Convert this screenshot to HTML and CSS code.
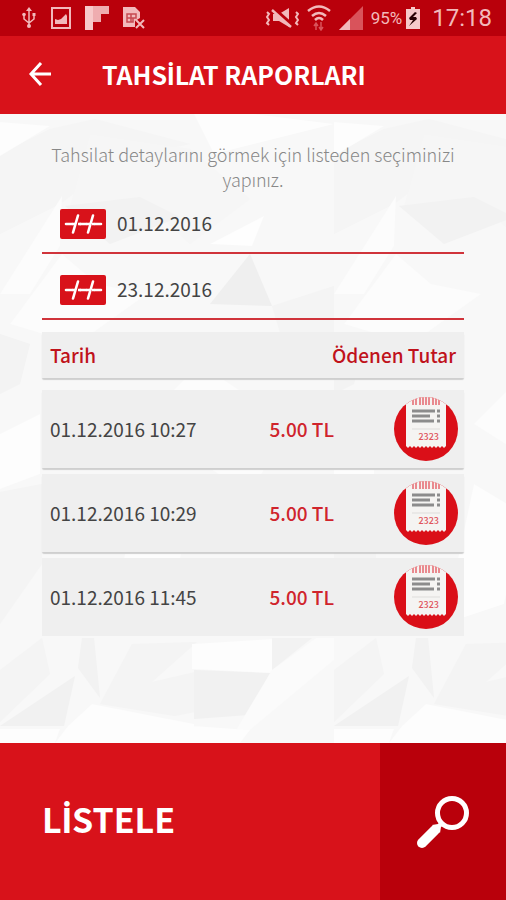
FILE: index.html
```html
<!DOCTYPE html>
<html lang="tr">
<head>
  <meta charset="UTF-8" />
  <meta name="viewport" content="width=device-width, initial-scale=1" />
  <title>Tahsilat Raporları</title>
  <link rel="stylesheet" href="styles.css">
</head>
<body>
  <svg class="sprite" aria-hidden="true">
    <symbol id="icon-date" viewBox="0 0 46 30">
      <rect width="46" height="30" rx="2" fill="#d8121a" />
      <path d="M6 15h6M20 15h6M35 15h6M13 23.500l5-17M28 23.500l5-17" fill="none" stroke="#fff" stroke-width="2.600" stroke-linecap="round" />
      <path d="M12 15h3M18 15h3M26 15h4M32 15h3" stroke="#fff" stroke-width="2.600" />
    </symbol>
    <symbol id="icon-receipt" viewBox="0 0 64 64">
      <clipPath id="disc"><circle cx="32" cy="32" r="32" /></clipPath>
      <g clip-path="url(#disc)">
        <rect width="64" height="64" fill="#da0f18" />
        <path d="M12 0h40v49l-2 2-2-2-2 2-2-2-2 2-2-2-2 2-2-2-2 2-2-2-2 2-2-2-2 2-2-2-2 2-2-2-2 2-2-2-2 2-2-2z" fill="#f5f4f2" />
        <path d="M19 3v5M22 0v8M26 0v8M29 0v8M32 0v8M35 0v8M39 0v8M42 0v8M45 3v5" stroke="#e98a8f" stroke-width="2" />
        <path d="M18 14h23M18 19h18M18 24h22M43 14h3M43 19h3M43 24h3" stroke="#8c8c8c" stroke-width="3" />
        <path d="M18 32h28" stroke="#dedddb" />
        <text x="45" y="43" class="receipt-no">2323</text>
      </g>
    </symbol>
  </svg>

  <div class="status-bar">
    <div class="status-group status-left">
      <svg width="16" height="22" viewBox="0 0 16 22" fill="none" stroke="#f2b9bb" stroke-width="1.500">
        <path d="M8 3v15M3 8v4l5 4 5-4V8" />
        <path d="M8 0l3 4H5z" fill="#f2b9bb" stroke="none" />
        <circle cx="8" cy="19" r="2" fill="#f2b9bb" stroke="none" />
        <circle cx="3" cy="7.500" r="1.800" fill="#f2b9bb" stroke="none" />
        <path d="M11.500 6h3v3h-3z" fill="#f2b9bb" stroke="none" />
      </svg>
      <svg width="20" height="22" viewBox="0 0 20 22">
        <rect x="1" y="1" width="18" height="20" fill="none" stroke="#f2b9bb" stroke-width="2" />
        <path d="M4 17v-5l3 1 3-1 5-5 1 2v8z" fill="#f2b9bb" />
      </svg>
      <svg width="24" height="24" viewBox="0 0 24 24">
        <path d="M0 0h24v8H16v8H8v8H0z" fill="#f7c9ca" />
        <path d="M8 8h8v8H8zM8 0h16v8H8z" fill="#efadb0" />
      </svg>
      <svg width="22" height="22" viewBox="0 0 22 22">
        <path d="M0 0h12l5 5v6l-5 3v6H0z" fill="#f2b9bb" />
        <path d="M4 7h9v4H4zM4 11h6v4H4zM8 7v8" fill="none" stroke="#c64a51" stroke-width="1.500" />
        <path d="M13 13l8 8M21 13l-8 8" stroke="#f2b9bb" stroke-width="2" />
      </svg>
    </div>
    <div class="status-group">
      <svg width="34" height="22" viewBox="0 0 34 22" fill="none" stroke="#f2b9bb">
        <path d="M2 5l2 2-2 3 2 3-2 3 2 2M31 5l2 2-2 3 2 3-2 3 2 2" stroke-width="2" />
        <path d="M8 7h6l10-6v19l-10-6H8z" fill="#f2b9bb" stroke="none" />
        <path d="M9 2l19 17" stroke="#b9000b" stroke-width="4" />
        <path d="M7 3l19 17" stroke-width="2.500" />
      </svg>
      <svg width="24" height="26" viewBox="0 0 24 26" fill="none" stroke="#f2b9bb" stroke-width="2.500">
        <path d="M1 6q11-9 22 0M5 11q7-6 14 0M8 15q4-4 8 0" />
        <path d="M9 18v7M7 21l2-3 2 3M14 17v7M12 22l2 3 2-3" stroke="#d9535b" stroke-width="1.500" />
      </svg>
      <svg width="24" height="24" viewBox="0 0 24 24">
        <path d="M0 24L24 0v24z" fill="#d9535b" />
        <path d="M0 24l11-11v11z" fill="#f2b9bb" />
      </svg>
      <span class="battery-text">95%</span>
      <svg class="battery" width="14" height="22" viewBox="0 0 14 22">
        <path d="M0 2h5V0h4v2h5v20H0z" fill="#f7c9ca" />
        <path d="M9 5l-6 6 1 2h3l-4 6 8-7-1-2H7l4-4z" fill="#2a0204" />
      </svg>
      <span class="clock">17:18</span>
    </div>
  </div>

  <header class="header">
    <button class="back-btn" type="button" aria-label="Geri">
      <svg width="24" height="24" viewBox="0 0 24 24" fill="none" stroke="#fff" stroke-width="3">
        <path d="M13 1L3 12l10 11M3 12h20" />
      </svg>
    </button>
    <h1>TAHS<span class="dotted">İ</span>LAT RAPORLARI</h1>
  </header>

  <main class="content">
    <svg class="facets" viewBox="0 0 506 629" preserveAspectRatio="xMidYMid slice" aria-hidden="true">
      <defs>
        <pattern id="facet" width="334" height="629" patternUnits="userSpaceOnUse">
          <rect width="334" height="629" fill="#f8f8f8" />
          <path d="M0 40l50-25 45-10 95 25-70 15-60 45-60 30z" fill="#f5f5f5" />
          <path d="M0 8l50 4-50 30zM334 10l-80-10h-60l20 40 60-15z" fill="#fdfdfd" />
          <path d="M90 20l100 15 60 50-60 45-50-47-70 10z" fill="#f6f6f6" />
          <path d="M65 92l75-9 40 20-70 27z" fill="#f2f2f2" />
          <path d="M210 130l54-28-12 30z" fill="#fefefe" />
          <path d="M210 190l40-50 22 52z" fill="#efefef" />
          <path d="M62 140l35 30 50 10-70 50-67-20z" fill="#fcfcfc" />
          <path d="M0 180l62-98-2 50-30 48z" fill="#fcfcfc" />
          <path d="M272 192l62-20v50l-50 10z" fill="#f4f4f4" />
          <path d="M0 220l30 10-10 40-20 10z" fill="#f3f3f3" />
          <path d="M0 320l40-20v60l-40 15z" fill="#fdfdfd" />
          <path d="M0 378l42-8v80l-42 60z" fill="#f4f4f4" />
          <path d="M140 310l60-60 90 60-40 70z" fill="#fcfcfc" />
          <path d="M140 370l50 30-20 90-60 20z" fill="#fdfdfd" />
          <path d="M0 556l42-32 8 36-50 48z" fill="#f4f4f4" />
          <path d="M0 612l75-50-11 50z" fill="#f1f1f1" />
          <path d="M82 524l12 0 6 60-22-30z" fill="#f2f2f2" />
          <path d="M100 590l32-60 65-2-45 40 43-10v40l-20 4z" fill="#f4f4f4" />
          <path d="M194 556l76 3-22 42-54 4z" fill="#f1f1f1" />
          <path d="M192 530l80-5v34l-80-4z" fill="#fdfdfd" />
          <path d="M272 524h40l-40 32z" fill="#f2f2f2" />
          <path d="M272 556l44-32h18v22l-84 70-20 10z" fill="#fbfbfb" />
          <path d="M68 612l24-22 102 20v19H55zM0 615h60l-5 14H0zM194 612l56 4-10 13h-46z" fill="#fdfdfd" />
        </pattern>
      </defs>
      <rect width="506" height="629" fill="url(#facet)" />
    </svg>

    <form class="report" id="report-form">
      <p class="hint">Tahsilat detaylarını görmek için listeden seçiminizi yapınız.</p>
      <div class="date-field">
        <label for="start-date" aria-label="Başlangıç tarihi"><svg width="46" height="30"><use href="#icon-date" /></svg></label>
        <input type="text" id="start-date" value="01.12.2016" />
      </div>
      <div class="date-field">
        <label for="end-date" aria-label="Bitiş tarihi"><svg width="46" height="30"><use href="#icon-date" /></svg></label>
        <input type="text" id="end-date" value="23.12.2016" />
      </div>
    </form>

    <table class="payments">
      <thead>
        <tr><th class="date">Tarih</th><th class="paid" colspan="2">Ödenen Tutar</th></tr>
      </thead>
      <tbody>
        <tr>
          <td>01.12.2016 10:27</td>
          <td class="amount">5.00 TL</td>
          <td class="action"><button type="button" aria-label="Makbuz"><svg width="64" height="64"><use href="#icon-receipt" /></svg></button></td>
        </tr>
        <tr>
          <td>01.12.2016 10:29</td>
          <td class="amount">5.00 TL</td>
          <td class="action"><button type="button" aria-label="Makbuz"><svg width="64" height="64"><use href="#icon-receipt" /></svg></button></td>
        </tr>
        <tr>
          <td>01.12.2016 11:45</td>
          <td class="amount">5.00 TL</td>
          <td class="action"><button type="button" aria-label="Makbuz"><svg width="64" height="64"><use href="#icon-receipt" /></svg></button></td>
        </tr>
      </tbody>
    </table>
  </main>

  <button class="list-btn" type="submit" form="report-form">
    <span class="list-label">L<span class="dotted">İ</span>STELE</span>
    <span class="list-icon">
      <svg width="54" height="54" viewBox="0 0 54 54">
        <circle cx="36" cy="18" r="14.500" fill="none" stroke="#fff" stroke-width="5" />
        <path d="M24 26l4 4-3 2-1 6-8-8 6-1z" fill="#fff" />
        <path d="M6 48l13-13" stroke="#fff" stroke-width="10" stroke-linecap="round" />
      </svg>
    </span>
  </button>
</body>
</html>
```
FILE: styles.css
```css
* {
  box-sizing: border-box;
}

body {
  margin: 0;
  min-height: 100vh;
  display: flex;
  flex-direction: column;
  font-family: "Noto Sans CJK SC", "Noto Sans", sans-serif;
  color: #444;
  background: #f9f9f9;
}

button {
  border: none;
  padding: 0;
  background: none;
  color: inherit;
  font-family: inherit;
  cursor: pointer;
}

svg {
  display: block;
}

.sprite {
  position: absolute;
  width: 0;
  height: 0;
}

.dotted {
  font-family: Lato, sans-serif;
  font-weight: 900;
  line-height: 1;
}

/* status bar */
.status-bar {
  display: flex;
  justify-content: space-between;
  align-items: center;
  height: 36px;
  padding: 0 14px 0 21px;
  background: #b9000b;
  color: #f2b9bb;
  font-family: Roboto, sans-serif;
}

.status-group {
  display: flex;
  align-items: center;
  gap: 8px;
}

.status-left {
  gap: 14px;
}

.battery-text {
  font-size: 17px;
}

.battery {
  margin-left: -4px;
}

.clock {
  margin-left: 4px;
  font-size: 24px;
}

/* header */
.header {
  display: flex;
  align-items: center;
  gap: 50px;
  height: 78px;
  padding: 0 28px 2px;
  background: #d8121a;
  color: #fff;
}

.header h1 {
  margin: 0;
  font-size: 25px;
  line-height: 32px;
  font-weight: 700;
}

/* content */
.content {
  position: relative;
  flex: 1;
  padding: 28px 42px 0;
  overflow: hidden;
}

.facets {
  position: absolute;
  inset: 0;
  width: 100%;
  height: 100%;
}

.report,
.payments {
  position: relative;
}

.hint {
  margin: 0 0 4px;
  text-align: center;
  font-size: 18px;
  line-height: 25px;
  font-weight: 300;
  color: #888;
}

.date-field {
  display: flex;
  align-items: center;
  gap: 11px;
  height: 58px;
  padding: 0 18px;
  border-bottom: 2px solid #d0343b;
}

.date-field + .date-field {
  margin-top: 8px;
}

.date-field input {
  flex: 1;
  min-width: 0;
  border: none;
  padding: 0 0 2px;
  background: none;
  color: #444;
  font-family: inherit;
  font-size: 19px;
  line-height: 28px;
}

/* payments */
.payments {
  width: 100%;
  margin-top: 6px;
  table-layout: fixed;
  border-collapse: separate;
  border-spacing: 0 6px;
}

/* empty row, widens the gap under the head */
.payments tbody::before {
  content: "";
  display: table-row;
}

.payments tr {
  border-radius: 2px;
  box-shadow: 0 2px 1px #cfcfcf;
}

.payments tbody tr:last-child {
  box-shadow: none;
}

.payments th,
.payments td {
  padding: 0 8px 2px;
  text-align: left;
  font-size: 19px;
  background: #efefef;
}

.payments th {
  height: 46px;
  color: #c0121b;
  font-weight: 500;
}

.payments .date {
  width: 52%;
}

.payments .paid {
  text-align: right;
}

.payments td {
  height: 78px;
}

.payments .amount {
  color: #d0242c;
  font-weight: 500;
}

.payments .action {
  padding: 0 6px 0 0;
}

.action button {
  display: block;
  margin-left: auto;
}

.receipt-no {
  font-size: 9px;
  font-weight: 500;
  fill: #e0545c;
  text-anchor: end;
}

/* list button */
.list-btn {
  display: flex;
  height: 157px;
  background: #d8121a;
  color: #fff;
  text-align: left;
}

.list-label {
  width: 75%;
  align-self: center;
  padding: 0 0 6px 42px;
  font-size: 34px;
  font-weight: 700;
}

.list-icon {
  width: 25%;
  align-self: stretch;
  display: flex;
  align-items: center;
  justify-content: center;
  background: #b9000b;
}
```
